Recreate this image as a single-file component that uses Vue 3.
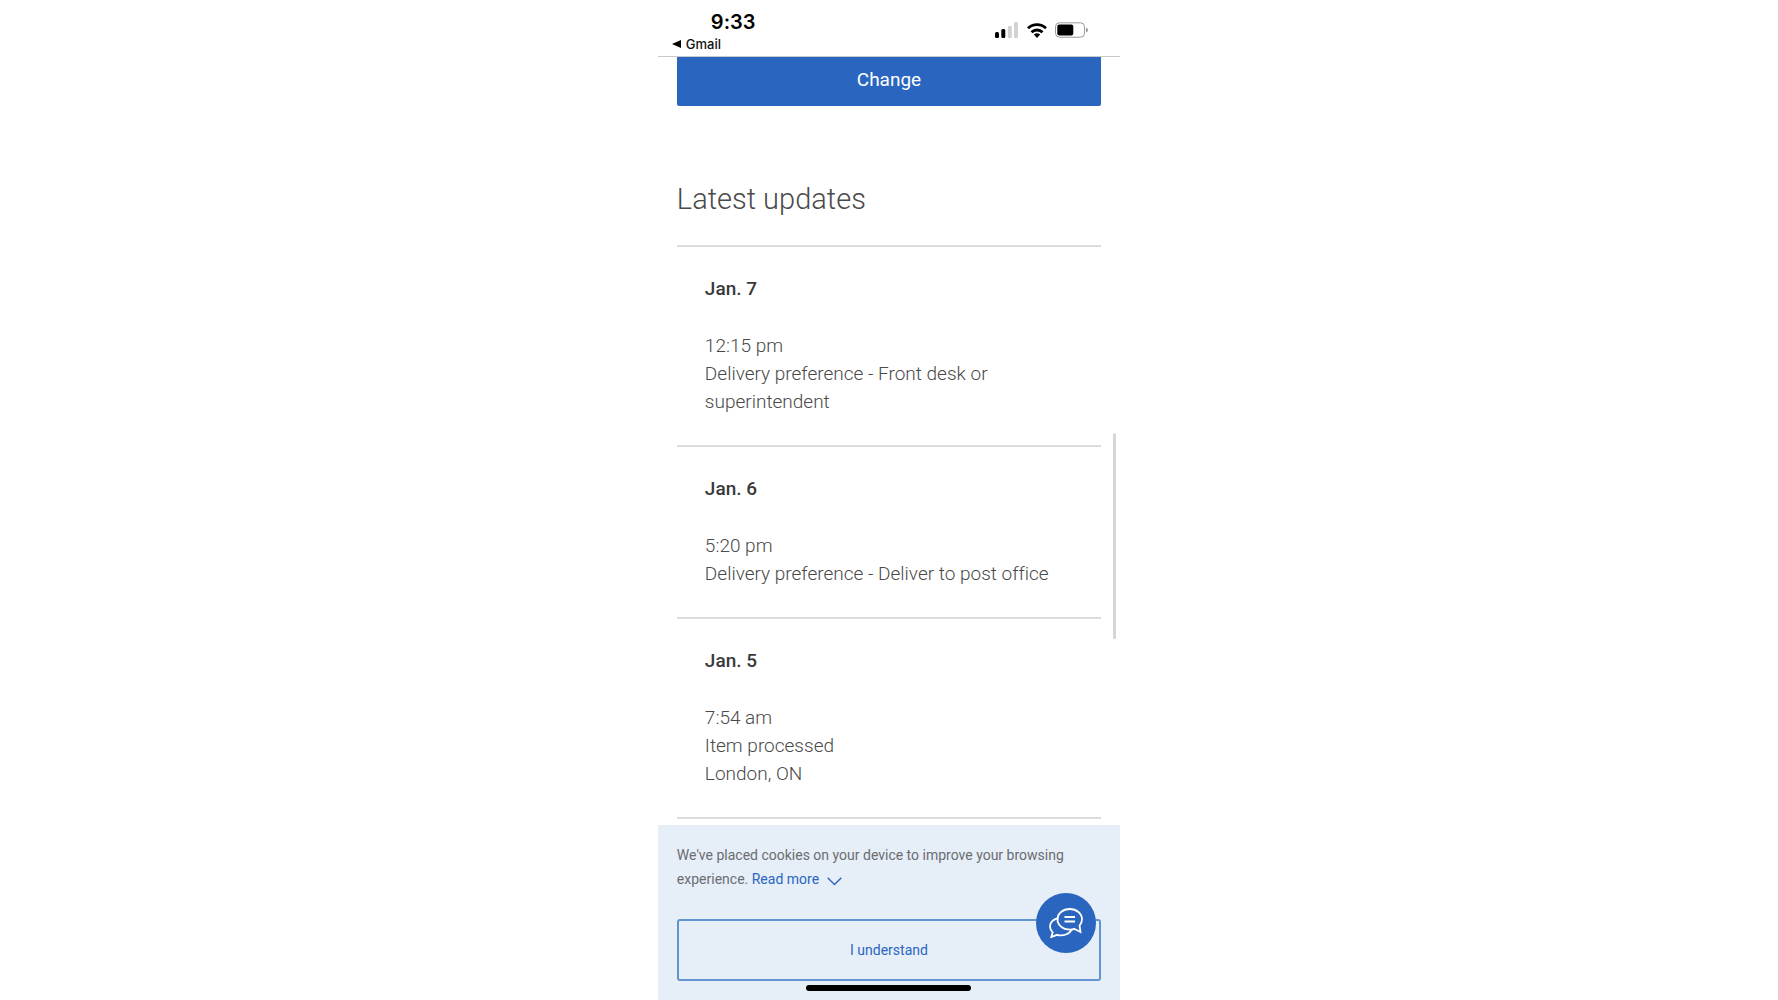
<template>
  <div class="phone">
    <header class="status-bar">
      <div class="status-left">
        <span class="clock">9:33</span>
        <a class="back" href="#">
          <svg width="9" height="8" viewBox="0 0 9 8" aria-hidden="true"><path d="M0 4 9 0v8z" /></svg>
          Gmail
        </a>
      </div>
      <div class="status-icons">
        <svg width="24" height="16" viewBox="0 0 24 16" aria-hidden="true">
          <rect x="0" y="10" width="4" height="6" rx="1.500" />
          <rect x="6.300" y="7" width="4" height="9" rx="1.500" />
          <rect x="12.800" y="4" width="4" height="12" rx="1" fill="#d2d2d2" />
          <rect x="19" y="0" width="4" height="16" rx="1" fill="#d2d2d2" />
        </svg>
        <svg width="20" height="15" viewBox="0 0 20 15" aria-hidden="true">
          <g fill="none" stroke="#000" stroke-width="2.8">
            <path d="M1 5.300a13 13 0 0 1 18 0" />
            <path d="M4.500 9.200a8 8 0 0 1 11 0" />
          </g>
          <path d="M10 15l-3.200-3.400a4.800 4.800 0 0 1 6.400 0z" />
        </svg>
        <svg width="33" height="16" viewBox="0 0 33 16" aria-hidden="true">
          <rect x="0.500" y="0.800" width="29" height="14.400" rx="4" fill="none" stroke="#9a9a9a" />
          <rect x="2.300" y="2.500" width="16" height="11" rx="2" />
          <path d="M31 5.500q2 .8 2 2.500t-2 2.500z" fill="#9a9a9a" />
        </svg>
      </div>
    </header>

    <main class="content">
      <button type="button" class="change">Change</button>
      <h1 class="title">Latest updates</h1>
      <section v-for="update in updates" :key="update.date" class="update">
        <h2 class="date">{{ update.date }}</h2>
        <p v-for="line in update.lines" :key="line" class="line">{{ line }}</p>
      </section>
      <div class="scrollbar" />
    </main>

    <footer class="cookies">
      <p class="cookie-text">
        We've placed cookies on your device to improve your browsing experience.
        <a class="more" href="#">
          Read more
          <svg width="15" height="9" viewBox="0 0 15 9" aria-hidden="true"><path d="M.7.8l6.800 6.800L14.300.8" /></svg>
        </a>
      </p>
      <div class="accept-row">
        <button type="button" class="accept">I understand</button>
        <button type="button" class="chat" aria-label="Chat">
          <svg width="34" height="30" viewBox="0 0 34 30" aria-hidden="true">
            <path d="M9.500 10C4.500 11.200 1 14.500 1 18.500c0 2.300 1 4.300 2.700 5.800L2.300 29l5.800-2.200c6 1.600 12.500-.6 14.400-5.200" />
            <path d="M20.700 1C13.800 1 8.500 5.500 8.500 11.300s5.300 10.400 12.200 10.400c1.700 0 3.300-.3 4.800-.8l6 3.100-.9-6.500c1.500-1.700 2.400-3.800 2.400-6.200C33 5.500 27.600 1 20.700 1z" />
            <path d="M15.500 9h10.500M15.500 13.500h10.500" />
          </svg>
        </button>
      </div>
      <div class="home-bar" />
    </footer>
  </div>
</template>

<script setup>
const updates = [
  {
    date: 'Jan. 7',
    lines: ['12:15 pm', 'Delivery preference - Front desk or superintendent'],
  },
  {
    date: 'Jan. 6',
    lines: ['5:20 pm', 'Delivery preference - Deliver to post office'],
  },
  {
    date: 'Jan. 5',
    lines: ['7:54 am', 'Item processed', 'London, ON'],
  },
]
</script>

<style>
body {
  margin: 0;
  background: #fff;
}
</style>

<style scoped>
.phone {
  display: flex;
  flex-direction: column;
  width: 26%;
  min-width: 320px;
  min-height: 100vh;
  margin: 0 auto;
  font-family: Roboto, sans-serif;
  font-variant-ligatures: none;
  color: #4a4a4a;
}

.status-bar {
  display: flex;
  justify-content: space-between;
  height: 56px;
  border-bottom: 1px solid #c9c9cc;
  color: #000;
  font-family: Inter, sans-serif;
}

.status-left {
  display: flex;
  flex-direction: column;
  padding: 10px 0 0 14px;
}

.clock {
  padding-left: 39px;
  font-size: 20px;
  font-weight: 600;
  line-height: 24px;
}

.back {
  display: flex;
  align-items: center;
  gap: 5px;
  color: #111;
  font-size: 13px;
  font-weight: 500;
  line-height: 20px;
  text-decoration: none;
}

.status-icons {
  display: flex;
  gap: 8px;
  align-items: center;
  height: 16px;
  padding: 22px 32px 0 0;
}

.content {
  position: relative;
  flex: 1;
  padding: 0 19px;
}

.change {
  display: block;
  width: 100%;
  height: 49px;
  padding: 0 0 4px;
  border: 0;
  border-radius: 0 0 2px 2px;
  background: #2a66c0;
  color: #fff;
  font: 400 19px/24px Roboto, sans-serif;
}

.title {
  margin: 75px 0 27px;
  font-size: 29px;
  font-weight: 300;
  line-height: 37px;
}

.update {
  padding: 28px 28px 29px;
  border-top: 2px solid #dcdcdc;
}

.update:last-of-type {
  border-bottom: 2px solid #dcdcdc;
}

.date {
  margin: 0 0 29px;
  color: #3a3a3a;
  font-size: 19px;
  font-weight: 500;
  line-height: 28px;
}

.line {
  margin: 0;
  font-size: 19px;
  font-weight: 300;
  line-height: 28px;
}

/* scroll position indicator over the right edge */
.scrollbar {
  position: absolute;
  top: 376px;
  right: 4px;
  width: 3px;
  height: 206px;
  border-radius: 2px;
  background: #d6d6d6;
}

.cookies {
  padding: 18px 19px 9px;
  background: #e6eef8;
}

.cookie-text {
  margin: 0 0 28px;
  color: #6b6d70;
  font-size: 14px;
  line-height: 24px;
}

.more {
  color: #2a66c0;
  text-decoration: none;
}

.more svg {
  margin-left: 4px;
  vertical-align: -2px;
  fill: none;
  stroke: #2a66c0;
  stroke-width: 1.4;
}

.accept-row {
  position: relative;
}

.accept {
  display: block;
  width: 100%;
  height: 62px;
  border: 2px solid #6295d0;
  border-radius: 3px;
  background: transparent;
  color: #2a66c0;
  font: 400 14px/20px Roboto, sans-serif;
}

.chat {
  position: absolute;
  top: -26px;
  right: 5px;
  display: flex;
  align-items: center;
  justify-content: center;
  width: 60px;
  height: 60px;
  padding: 0;
  border: 0;
  border-radius: 50%;
  background: #2a66c0;
}

.chat svg {
  fill: none;
  stroke: #fff;
  stroke-width: 1.8;
}

.home-bar {
  width: 165px;
  height: 6px;
  margin: 4px auto 0;
  border-radius: 3px;
  background: #000;
}
</style>
